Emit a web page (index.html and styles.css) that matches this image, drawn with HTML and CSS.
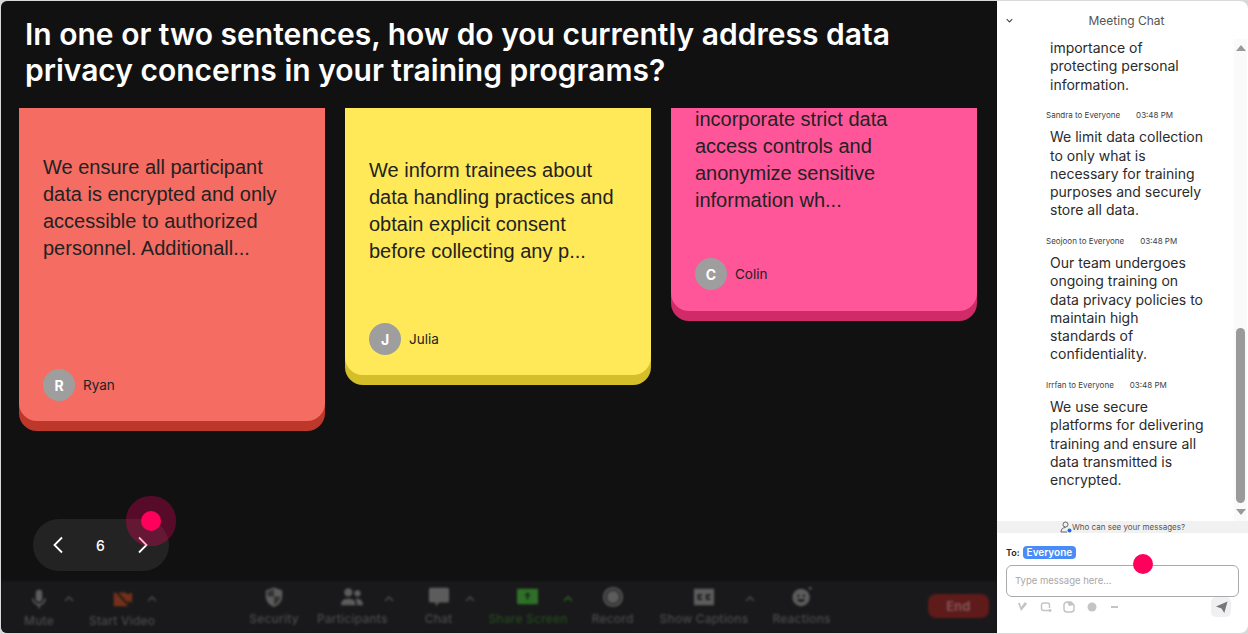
FILE: index.html
```html
<!DOCTYPE html>
<html lang="en">
<head>
  <meta charset="UTF-8" />
  <title>Meeting whiteboard</title>
  <link rel="stylesheet" href="styles.css">
</head>
<body>
  <div class="app">
    <main class="stage">
      <h1 class="question">In one or two sentences, how do you currently address data privacy concerns in your training programs?</h1>

      <div class="board">
        <div class="card card-red">
          <p class="card-text">We ensure all participant data is encrypted and only accessible to authorized personnel. Additionall...</p>
          <div class="author"><span class="avatar">R</span><span>Ryan</span></div>
        </div>
        <div class="card card-yellow">
          <p class="card-text">We inform trainees about data handling practices and obtain explicit consent before collecting any p...</p>
          <div class="author"><span class="avatar">J</span><span>Julia</span></div>
        </div>
        <div class="card card-pink">
          <p class="card-text">incorporate strict data access controls and anonymize sensitive information wh...</p>
          <div class="author"><span class="avatar">C</span><span>Colin</span></div>
        </div>
      </div>

      <div class="pager">
        <svg class="pager-arrow" viewBox="0 0 12 18"><path d="M10 1.5 2.5 9l7.5 7.5" /></svg>
        <span class="pager-num">6</span>
        <svg class="pager-arrow" viewBox="0 0 12 18"><path d="M2 1.5 9.5 9 2 16.5" /></svg>
      </div>

      <div class="toolbar">
        <div class="tool tool-mute">
          <svg viewBox="0 0 24 24"><rect x="8.5" y="2" width="7" height="13" rx="3.5" /><path class="line" d="M5.5 11.5c0 4 3 6.5 6.500 6.500s6.500-2.500 6.500-6.500M12 18v4" /></svg>
          <span>Mute</span>
        </div>
        <svg class="caret caret-mute" viewBox="0 0 10 6"><path d="m1 5 4-4 4 4" /></svg>
        <div class="tool tool-video">
          <svg class="video-off" viewBox="0 0 24 24"><path d="M3 5h13l2 2 5-2v11l-4-2v6H3z" /><path class="line-off" d="M3 1l19 21" /></svg>
          <span>Start Video</span>
        </div>
        <svg class="caret caret-video" viewBox="0 0 10 6"><path d="m1 5 4-4 4 4" /></svg>

        <div class="tool tool-security raised">
          <svg viewBox="0 0 24 24"><path d="M12 1.500 21 5v6c0 6-4 10-9 12-5-2-9-6-9-12V5z" /><path class="shade" d="M12 3.500 5 6v5.500h7zM12 11.500h7c-.5 4.500-3.500 7.500-7 9.300z" /></svg>
          <span>Security</span>
        </div>
        <div class="tool tool-people raised">
          <svg viewBox="0 0 24 24"><circle cx="8" cy="7" r="4.500" /><circle cx="18" cy="8" r="3.500" /><path d="M0 21c0-5 3-7 8-7s8 2 8 7zM17.500 21c0-3-.5-5-2-7 5-1 8.500 1.500 8.500 7z" /></svg>
          <span>Participants</span>
        </div>
        <svg class="caret caret-people" viewBox="0 0 10 6"><path d="m1 5 4-4 4 4" /></svg>
        <div class="tool tool-chat raised">
          <svg viewBox="0 0 24 24"><path d="M3 2h18a2 2 0 0 1 2 2v12a2 2 0 0 1-2 2h-9l-3 4-1-4H3a2 2 0 0 1-2-2V4a2 2 0 0 1 2-2z" /></svg>
          <span>Chat</span>
        </div>
        <svg class="caret caret-chat" viewBox="0 0 10 6"><path d="m1 5 4-4 4 4" /></svg>
        <div class="tool tool-share raised">
          <svg viewBox="0 0 24 24"><rect y="3" width="23" height="17" rx="1.500" /><path class="arrow-up" d="M11.500 6.500 8 11h2.500v4h2v-4H15z" /></svg>
          <span>Share Screen</span>
        </div>
        <svg class="caret caret-share" viewBox="0 0 10 6"><path d="m1 5 4-4 4 4" /></svg>
        <div class="tool tool-record raised">
          <svg viewBox="0 0 24 24"><circle cx="12" cy="12" r="10" class="ring" /><circle cx="12" cy="12" r="6.500" /></svg>
          <span>Record</span>
        </div>
        <div class="tool tool-captions raised">
          <svg viewBox="0 0 24 24"><path fill-rule="evenodd" d="M1 3h22v18H1zM10 9H5v6h5v-2H7v-2h3zm9 0h-5v6h5v-2h-3v-2h3z" /></svg>
          <span>Show Captions</span>
        </div>
        <svg class="caret caret-captions" viewBox="0 0 10 6"><path d="m1 5 4-4 4 4" /></svg>
        <div class="tool tool-react raised">
          <svg viewBox="0 0 24 24"><path fill-rule="evenodd" d="M11 3a9.500 9.500 0 1 0 0 19 9.500 9.500 0 0 0 0-19zM7 9.500h2v2.500H7zm6 0h2v2.500h-2zM6.500 14.500h9c-.8 2-2.500 3-4.500 3s-3.700-1-4.500-3z" /><circle cx="21" cy="2.500" r="1.500" /></svg>
          <span>Reactions</span>
        </div>
        <div class="end-btn">End</div>
      </div>

      <span class="marker marker-halo"></span>
    </main>

    <aside class="chat">
      <div class="chat-head">
        <svg class="chat-chevron" viewBox="0 0 10 6"><path d="m1 1 4 4 4-4" /></svg>
        <span>Meeting Chat</span>
      </div>

      <div class="chat-main">
        <div class="chat-list">
          <p class="msg">importance of protecting personal information.</p>
          <div class="meta"><span>Sandra to Everyone</span><span>03:48 PM</span></div>
          <p class="msg">We limit data collection to only what is necessary for training purposes and securely store all data.</p>
          <div class="meta"><span>Seojoon to Everyone</span><span>03:48 PM</span></div>
          <p class="msg">Our team undergoes ongoing training on data privacy policies to maintain high standards of confidentiality.</p>
          <div class="meta"><span>Irrfan to Everyone</span><span>03:48 PM</span></div>
          <p class="msg">We use secure platforms for delivering training and ensure all data transmitted is encrypted.</p>
        </div>
        <div class="scrollbar">
          <span class="scroll-up"></span>
          <span class="scroll-thumb"></span>
          <span class="scroll-down"></span>
        </div>
      </div>

      <div class="who-bar">
        <svg class="who-icon" viewBox="0 0 12 12"><circle cx="5.500" cy="3.500" r="2.500" /><path d="M1 11c0-3 2-4.500 4.500-4.500M1 11h6" /><circle class="who-dot" cx="9.500" cy="9.500" r="2" /></svg>
        <span>Who can see your messages?</span>
      </div>

      <div class="compose">
        <div class="to-row"><span>To:</span><span class="to-badge">Everyone</span></div>
        <div class="input-box">Type message here...</div>
        <div class="compose-tools">
          <svg viewBox="0 0 12 12"><path d="M1 2l3 8 6-7-2-2-4 5-1-4z" /></svg>
          <svg viewBox="0 0 12 12"><path class="open" d="M9 9.500H3.500A2 2 0 0 1 1.500 7.500V4a2 2 0 0 1 2-2h4a2 2 0 0 1 2 2v3" /><path class="open" d="M10 8v3M8.500 9.500h3" /></svg>
          <svg viewBox="0 0 12 12"><path class="open" d="M4 1h4l3 3v4a3 3 0 0 1-3 3H4a3 3 0 0 1-3-3V4a3 3 0 0 1 3-3z" /><path d="M4 1l2 4 5-1-3-3z" /></svg>
          <svg viewBox="0 0 12 12"><circle cx="6" cy="6" r="4.500" /></svg>
          <svg viewBox="0 0 12 12"><rect x="2" y="5" width="7" height="2" /></svg>
          <span class="send-btn"><svg viewBox="0 0 14 14"><path d="M13.500.5 10 13 7 8 1 6z" /></svg></span>
        </div>
      </div>
      <span class="marker marker-compose"></span>
    </aside>
  </div>
</body>
</html>
```

FILE: styles.css
```css
* {
  box-sizing: border-box;
}

body {
  margin: 0;
  background-color: #d9d9d9;
  font-family: 'Inter', 'Liberation Sans', sans-serif;
}

.app {
  display: flex;
  width: 1248px;
  height: 634px;
  padding: 1px 0 1px 1px;
  overflow: hidden;
}

/* Left side */
.stage {
  position: relative;
  display: flex;
  flex-direction: column;
  width: 996px;
  flex: none;
  background-color: #111112;
  border-radius: 6px 0 0 6px;
  overflow: hidden;
}

.question {
  flex: none;
  height: 107px;
  margin: 0;
  padding: 15px 60px 0 24px;
  color: white;
  font-size: 30px;
  font-weight: 600;
  line-height: 36px;
}

.board {
  flex: none;
  display: flex;
  align-items: flex-start;
  gap: 20px;
  height: 411px;
  padding: 0 18px;
  overflow: hidden;
}

.card {
  flex: none;
  width: 306px;
  padding: 0 24px 20px;
  border-radius: 0 0 18px 18px;
  color: #222;
}

.card-text {
  margin: 0;
  font-family: 'Liberation Sans', Arial, sans-serif;
  font-size: 20px;
  line-height: 27px;
}

.card-red {
  padding-top: 46px;
  background-color: #f56c62;
  box-shadow: 0 10px 0 #be372b;
}

.card-red .card-text {
  margin-bottom: 107px;
}

.card-yellow {
  padding-top: 49px;
  background-color: #ffe959;
  box-shadow: 0 10px 0 #d4bf2a;
}

.card-yellow .card-text {
  margin-bottom: 58px;
}

.card-pink {
  margin-top: -2px;
  padding-bottom: 21px;
  background-color: #ff5599;
  box-shadow: 0 10px 0 #d02a68;
}

.card-pink .card-text {
  margin-bottom: 44px;
}

.author {
  display: flex;
  align-items: center;
  gap: 8px;
  font-size: 13.500px;
}

.avatar {
  display: flex;
  align-items: center;
  justify-content: center;
  width: 32px;
  height: 32px;
  border-radius: 50%;
  background-color: #9e9e9e;
  color: white;
  font-size: 14px;
  font-weight: 700;
}

.pager {
  flex: none;
  display: flex;
  align-items: center;
  justify-content: space-between;
  width: 136px;
  height: 52px;
  margin: 0 0 10px 32px;
  padding: 0 20px 0 19px;
  border-radius: 26px;
  background-color: #232323;
}

.pager-arrow {
  width: 12px;
  height: 18px;
  fill: none;
  stroke: white;
  stroke-width: 1.8;
}

.pager-num {
  color: white;
  font-size: 14px;
  font-weight: 500;
}

.toolbar {
  flex: none;
  display: flex;
  align-items: flex-start;
  height: 52px;
  background-color: #19191b;
  filter: blur(0.9px);
}

.tool {
  display: flex;
  flex-direction: column;
  align-items: center;
  padding-top: 7px;
  color: #4a4a4a;
  font-size: 12px;
  font-weight: 500;
  letter-spacing: 0.2px;
  white-space: nowrap;
}

.tool.raised {
  padding-top: 5px;
}

.tool svg {
  width: 22px;
  height: 22px;
  margin-bottom: 3px;
  fill: #5c5c5c;
}

.tool .line {
  fill: none;
  stroke: #5c5c5c;
  stroke-width: 2;
}

.tool .shade {
  fill: #333;
}

.video-off path {
  fill: #74301a;
}

.video-off .line-off {
  fill: none;
  stroke: #1a1a1b;
  stroke-width: 2;
}

.caret {
  flex: none;
  width: 10px;
  height: 6px;
  margin-top: 15px;
  fill: none;
  stroke: #484848;
  stroke-width: 1.6;
}

.tool-mute { margin-left: 23px; }
.caret-mute { margin-left: 10px; }
.tool-video { margin-left: 15px; }
.caret-video { margin-left: -8px; }
.tool-security { margin-left: 92px; }
.tool-people { margin-left: 18px; }
.caret-people { margin-left: -4px; }
.tool-chat { margin-left: 31px; }
.caret-chat { margin-left: 13px; }
.tool-share { margin-left: 13px; }
.caret-share { margin-left: -5px; }
.tool-record { margin-left: 19px; }
.tool-captions { margin-left: 26px; }
.caret-captions { margin-left: -3px; }
.tool-react { margin-left: 17px; }

.tool-share {
  color: #224a1c;
}

.tool-share svg {
  fill: #2f6f27;
}

.tool-share .arrow-up {
  fill: #16301a;
}

.caret-share {
  stroke: #2a5f22;
}

.tool-record .ring {
  fill: #333;
  stroke: #555;
  stroke-width: 2;
}

.end-btn {
  width: 61px;
  height: 24px;
  margin: 13px 0 0 97px;
  border-radius: 8px;
  background-color: #5f1a1a;
  color: #805656;
  font-size: 13px;
  font-weight: 700;
  line-height: 24px;
  text-align: center;
}

/* Pink cursor markers */
.marker {
  position: absolute;
  width: 20px;
  height: 20px;
  border-radius: 50%;
  background-color: #ff005c;
}

.marker-halo {
  left: 140px;
  top: 510px;
  box-shadow: 0 0 0 15px rgba(255, 0, 92, 0.3);
}

.marker-compose {
  left: 136px;
  top: 553px;
}

/* Chat panel */
.chat {
  position: relative;
  display: flex;
  flex-direction: column;
  flex: 1;
  min-width: 0;
  background-color: white;
  border-radius: 0 8px 8px 0;
  overflow: hidden;
}

.chat-head {
  position: relative;
  flex: none;
  height: 38px;
  padding: 13px 0 0 8px;
  color: #555;
  font-size: 12px;
  line-height: 14px;
  text-align: center;
}

.chat-chevron {
  position: absolute;
  left: 9px;
  top: 17px;
  width: 7px;
  height: 5px;
  fill: none;
  stroke: #444;
  stroke-width: 1.5;
}

.chat-main {
  flex: none;
  display: flex;
  height: 482px;
  overflow: hidden;
}

.chat-list {
  flex: 1;
  min-width: 0;
  padding: 0 0 0 53px;
}

.msg {
  width: 155px;
  margin: 0;
  color: #2b2b2b;
  font-size: 14px;
  line-height: 18.25px;
}

.meta {
  display: flex;
  gap: 16px;
  margin: 15.500px 0 7px -4px;
  color: #3e3e3e;
  font-size: 8px;
  line-height: 12px;
  white-space: nowrap;
}

.scrollbar {
  flex: none;
  display: flex;
  flex-direction: column;
  align-items: center;
  width: 13px;
  margin-right: 1px;
  padding-top: 6px;
  background-color: #fafafa;
}

.scroll-up,
.scroll-down {
  width: 0;
  height: 0;
  border-left: 5px solid transparent;
  border-right: 5px solid transparent;
}

.scroll-up {
  border-bottom: 6px solid #9a9a9a;
}

.scroll-down {
  margin-top: 6px;
  border-top: 6px solid #9a9a9a;
}

.scroll-thumb {
  width: 9px;
  height: 175px;
  margin-top: 277px;
  border-radius: 5px;
  background-color: #9a9a9a;
}

.who-bar {
  flex: none;
  display: flex;
  align-items: center;
  justify-content: center;
  height: 12px;
  background-color: #f1f1f1;
  color: #555;
  font-size: 8px;
}

.who-icon {
  width: 12px;
  height: 12px;
  fill: none;
  stroke: #666;
}

.who-icon .who-dot {
  fill: #1a6fe8;
  stroke: none;
}

.compose {
  flex: 1;
  padding: 13px 8px 0 9px;
}

.to-row {
  display: flex;
  align-items: center;
  gap: 3px;
  margin-bottom: 6px;
  color: #222;
  font-size: 9px;
  font-weight: 600;
}

.to-badge {
  padding: 0 4px;
  border-radius: 4px;
  background-color: #4a8cf7;
  color: white;
  font-size: 10px;
  font-weight: 600;
  line-height: 13px;
}

.input-box {
  width: 233px;
  height: 32px;
  padding-left: 8px;
  border: 1px solid #aaa;
  border-radius: 6px;
  color: #a8a8a8;
  font-size: 9.500px;
  line-height: 29px;
}

.compose-tools {
  display: flex;
  align-items: center;
  gap: 11px;
  padding-left: 11px;
}

.compose-tools svg {
  flex: none;
  width: 12px;
  height: 12px;
  fill: #c4c4c4;
}

.compose-tools .open {
  fill: none;
  stroke: #c4c4c4;
  stroke-width: 1.5;
}

.send-btn {
  display: flex;
  align-items: center;
  justify-content: center;
  width: 20px;
  height: 20px;
  margin-left: 79px;
  border-radius: 5px;
  background-color: #f0f0f3;
}

.compose-tools .send-btn svg {
  width: 13px;
  height: 13px;
  fill: #777;
}
```
